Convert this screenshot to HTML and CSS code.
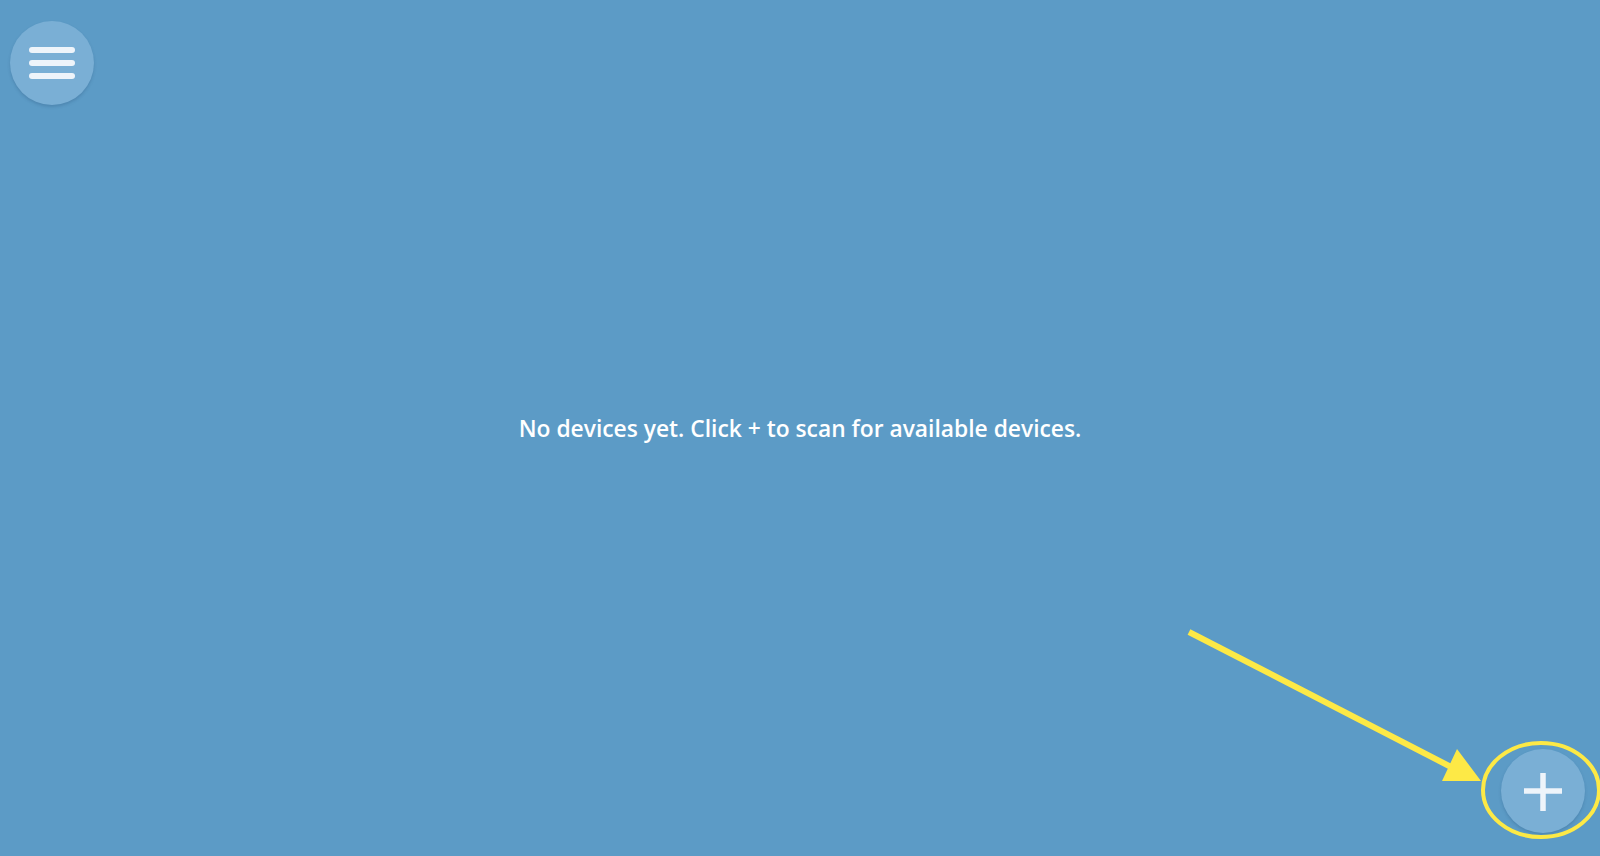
FILE: index.html
```html
<!DOCTYPE html>
<html lang="en">
<head>
<meta charset="utf-8">
<title>Devices</title>
<link rel="stylesheet" href="styles.css">
</head>
<body>
<main class="app">
  <button class="fab fab-menu" aria-label="Menu">
    <span class="bar"></span>
    <span class="bar"></span>
    <span class="bar"></span>
  </button>
  <p class="empty">No devices yet. Click + to scan for available devices.</p>
  <button class="fab fab-add" aria-label="Add device">
    <svg width="40" height="40" viewBox="0 0 40 40"><path d="M20 2v38M1 20h38" stroke="#eef4fa" stroke-width="5.5" fill="none"/></svg>
  </button>
  <svg class="annotation" width="1600" height="856" viewBox="0 0 1600 856">
    <line x1="1189" y1="632" x2="1455" y2="769" stroke="#fde946" stroke-width="6"/>
    <polygon points="1481,781 1457,749 1442,781" fill="#fde946"/>
    <ellipse cx="1541" cy="790" rx="58" ry="47" fill="none" stroke="#fde946" stroke-width="4"/>
  </svg>
</main>
</body>
</html>
```
FILE: styles.css
```css
html, body {
  margin: 0;
  height: 100%;
}
body {
  background: #5c9bc6;
  font-family: "Open Sans", "Noto Sans", sans-serif;
  overflow: hidden;
}
.app {
  position: relative;
  height: 100%;
  display: flex;
  align-items: center;
  justify-content: center;
}
.empty {
  margin: 0;
  color: #ffffff;
  font-size: 22.8px;
  font-weight: 600;
}
.fab {
  position: absolute;
  width: 84px;
  height: 84px;
  border-radius: 50%;
  border: none;
  padding: 0;
  background: #7aafd5;
  box-shadow: 0 2px 3px rgba(40, 80, 120, 0.25);
  display: flex;
  flex-direction: column;
  align-items: center;
  justify-content: center;
}
.fab-menu {
  left: 10px;
  top: 21px;
  gap: 7px;
}
.bar {
  display: block;
  width: 46px;
  height: 6px;
  border-radius: 3px;
  background: #eef4fa;
}
.fab-add {
  left: 1501px;
  top: 749px;
}
.annotation {
  position: absolute;
  left: 0;
  top: 0;
  pointer-events: none;
}
```
